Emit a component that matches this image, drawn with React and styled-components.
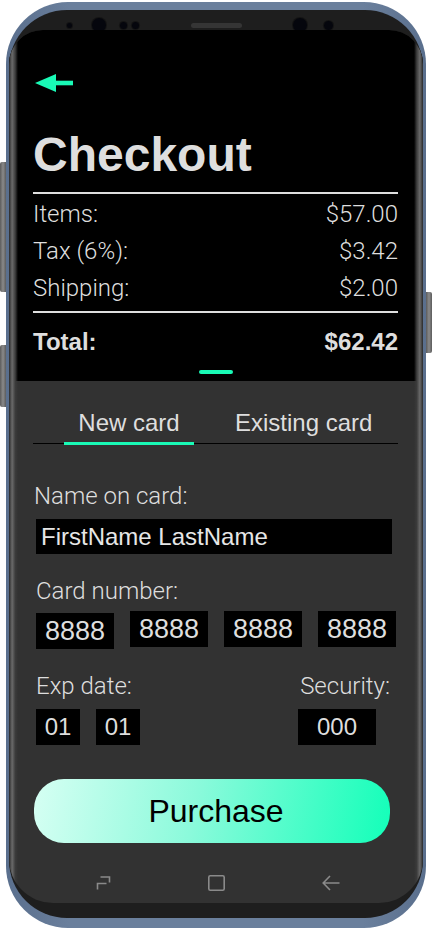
import React from "react"
import styled, { createGlobalStyle } from "styled-components"

const MINT = "#19fab6"
const TEXT = "#dedede"
const SANS = `"Liberation Sans", Arial, sans-serif`
const LIGHT = `Roboto, "Liberation Sans", sans-serif`

const GlobalStyle = createGlobalStyle`
  html, body {
    margin: 0;
    padding: 0;
    background: #ffffff;
  }
  * {
    box-sizing: border-box;
  }
`

const Stage = styled.div`
  padding: 2px 6px;
  width: 432px;
`

const Phone = styled.div`
  position: relative;
  width: 420px;
  height: 926px;
  padding: 8px 3px 10px;
  border-radius: 62px;
  background: linear-gradient(to right, #5a6f8d, #6a7f9c 15%, #6a7f9c 85%, #5a6f8d);
`

const SideButton = styled.div`
  position: absolute;
  top: ${p => p.$top}px;
  height: ${p => p.$height}px;
  width: 6px;
  ${p => (p.$right ? "right: -6px;" : "left: -6px;")}
  border-radius: ${p => (p.$right ? "0 2px 2px 0" : "2px 0 0 2px")};
  background: linear-gradient(to right, #5c5c5c, #8a8a8a, #5c5c5c);
`

const Bezel = styled.div`
  display: flex;
  flex-direction: column;
  height: 100%;
  padding-bottom: 15px;
  border-radius: 58px;
  background: #1e1e1e;
`

const TopBar = styled.div`
  display: flex;
  align-items: center;
  height: 20px;
  padding-top: 10px;
`

const Dot = styled.div`
  flex: none;
  width: ${p => p.$size}px;
  height: ${p => p.$size}px;
  margin-left: ${p => p.$gap}px;
  border-radius: 50%;
  background: #05060d;
  box-shadow: 0 0 0 1px #141414;
`

const Speaker = styled.div`
  flex: none;
  width: 51px;
  height: 5px;
  margin-left: 52.5px;
  border-radius: 3px;
  background: #353535;
`

const Screen = styled.div`
  position: relative;
  flex: 1;
  display: flex;
  flex-direction: column;
  overflow: hidden;
  border-radius: 34px 34px 44px 44px;
  background: #323232;

  &::before,
  &::after {
    content: "";
    position: absolute;
    top: 0;
    bottom: 0;
    width: 9px;
    pointer-events: none;
  }
  &::before {
    left: 0;
    background: linear-gradient(to right, #2a2a2a, #6a6a6a 35%, #3b3b3b 70%, rgba(0, 0, 0, 0));
  }
  &::after {
    right: 0;
    background: linear-gradient(to left, #2a2a2a, #6a6a6a 35%, #3b3b3b 70%, rgba(0, 0, 0, 0));
  }
`

const Header = styled.div`
  display: flex;
  flex-direction: column;
  padding: 44px 25px 7px 24px;
  background: #000000;
  color: ${TEXT};
`

const BackArrow = styled.svg`
  display: block;
  margin-left: 2px;
`

const Title = styled.h1`
  margin: 35px 0 0;
  font-family: ${SANS};
  font-size: 48px;
  font-weight: 700;
  line-height: 56px;
`

const Divider = styled.div`
  height: 2px;
  margin-top: ${p => p.$top}px;
  background: ${TEXT};
`

const SummaryRow = styled.div`
  display: flex;
  justify-content: space-between;
  margin-top: ${p => p.$top || 0}px;
  font-family: ${p => (p.$bold ? SANS : LIGHT)};
  font-size: 24px;
  font-weight: ${p => (p.$bold ? 700 : 300)};
  line-height: 37px;
`

const Handle = styled.div`
  width: 34px;
  height: 4px;
  margin: 10px auto 0;
  border-radius: 2px;
  background: ${MINT};
`

const Panel = styled.div`
  display: flex;
  flex-direction: column;
  flex: 1;
  padding: 27px 25px 0 24px;
  color: ${TEXT};
`

const TabBar = styled.div`
  display: flex;
  align-items: flex-start;
  gap: 41px;
  padding-left: 31px;
  border-bottom: 1px solid #000000;
`

const Tab = styled.div`
  flex: none;
  width: ${p => p.$w}px;
  padding-bottom: 4px;
  font-family: ${SANS};
  font-size: 24px;
  line-height: 30px;
  text-align: center;
  white-space: nowrap;
  ${p => (p.$active ? `border-bottom: 3px solid ${MINT}; margin-bottom: -2px;` : "")}
`

const Label = styled.div`
  margin-top: ${p => p.$top || 0}px;
  margin-left: ${p => p.$left || 0}px;
  align-self: ${p => (p.$end ? "flex-end" : "flex-start")};
  font-family: ${LIGHT};
  font-size: 24px;
  font-weight: 300;
  line-height: 30px;
  white-space: nowrap;
`

const NameField = styled.div`
  width: 356px;
  height: 35px;
  margin: 8px 0 0 3px;
  padding-left: 5px;
  background: #000000;
  color: #e6e6e6;
  font-family: ${SANS};
  font-size: 24px;
  line-height: 35px;
`

const BoxRow = styled.div`
  display: flex;
  align-items: flex-start;
  gap: ${p => p.$gap}px;
  margin: ${p => p.$top}px 0 0 ${p => p.$left ?? 3}px;
`

const Box = styled.div`
  width: ${p => p.$w}px;
  height: 36px;
  margin-top: ${p => p.$shift || 0}px;
  background: #000000;
  color: #dedede;
  font-family: ${SANS};
  font-size: ${p => p.$size || 24}px;
  line-height: 36px;
  text-align: center;
`

const ExpRow = styled.div`
  display: flex;
  justify-content: space-between;
  margin-top: 22px;
`

const FieldGroup = styled.div`
  display: flex;
  flex-direction: column;
  align-items: flex-start;
  width: ${p => (p.$w ? `${p.$w}px` : "auto")};
  margin-right: ${p => p.$right || 0}px;
`

const PurchaseButton = styled.button`
  width: 356px;
  height: 64px;
  margin: 34px 0 0 1px;
  padding: 0 0 0 8px;
  border: none;
  border-radius: 30px;
  background: linear-gradient(100deg, #d6fff3 0%, #8bfadb 45%, #13ffb9 100%);
  color: #000000;
  font-family: ${SANS};
  font-size: 32px;
  line-height: 64px;
  cursor: pointer;
`

const NavBar = styled.div`
  display: flex;
  align-items: center;
  justify-content: space-between;
  height: 40px;
  margin-top: auto;
  padding: 0 83px 0 87px;
`

const NavIcon = styled.svg`
  display: block;
  fill: none;
  stroke: #8a8a8a;
  stroke-width: 1.6;
`

const App = () => {
  const summary = [
    { label: "Items:", value: "$57.00" },
    { label: "Tax (6%):", value: "$3.42" },
    { label: "Shipping:", value: "$2.00" },
  ]

  return (
    <Stage>
      <GlobalStyle />
      <Phone>
        <SideButton $top={160} $height={130} />
        <SideButton $top={343} $height={62} />
        <SideButton $right $top={290} $height={61} />
        <Bezel>
          <TopBar>
            <Dot $size={5} $gap={57.5} />
            <Dot $size={14} $gap={20.5} />
            <Dot $size={7} $gap={13.5} />
            <Dot $size={7} $gap={5} />
            <Speaker />
            <Dot $size={14} $gap={51} />
            <Dot $size={9} $gap={16.5} />
          </TopBar>
          <Screen>
            <Header>
              <BackArrow width="38" height="18" viewBox="0 0 38 18">
                <polygon points="0,9 21,0 21,18" fill={MINT} />
                <rect x="20" y="6.7" width="18" height="4.6" fill={MINT} />
              </BackArrow>
              <Title>Checkout</Title>
              <Divider $top={9} />
              {summary.map((row, i) => (
                <SummaryRow key={row.label} $top={i === 0 ? 2 : 0}>
                  <span>{row.label}</span>
                  <span>{row.value}</span>
                </SummaryRow>
              ))}
              <Divider $top={4} />
              <SummaryRow $bold $top={10}>
                <span>Total:</span>
                <span>$62.42</span>
              </SummaryRow>
              <Handle />
            </Header>

            <Panel>
              <TabBar>
                <Tab $active $w={130}>New card</Tab>
                <Tab $w={136}>Existing card</Tab>
              </TabBar>

              <Label $top={37} $left={1}>Name on card:</Label>
              <NameField>FirstName LastName</NameField>

              <Label $top={22} $left={3}>Card number:</Label>
              <BoxRow $top={5} $gap={16}>
                <Box $w={78} $size={27} $shift={2}>8888</Box>
                <Box $w={78} $size={27}>8888</Box>
                <Box $w={78} $size={27}>8888</Box>
                <Box $w={78} $size={27}>8888</Box>
              </BoxRow>

              <ExpRow>
                <FieldGroup>
                  <Label $left={3}>Exp date:</Label>
                  <BoxRow $top={8} $gap={16}>
                    <Box $w={44}>01</Box>
                    <Box $w={44}>01</Box>
                  </BoxRow>
                </FieldGroup>
                <FieldGroup $w={92} $right={8}>
                  <Label $end>Security:</Label>
                  <BoxRow $top={8} $gap={0} $left={0}>
                    <Box $w={78}>000</Box>
                  </BoxRow>
                </FieldGroup>
              </ExpRow>

              <PurchaseButton>Purchase</PurchaseButton>
            </Panel>

            <NavBar>
              <NavIcon width="15" height="16" viewBox="0 0 15 16">
                <path d="M4.5 2 H13.5 V7.5" />
                <path d="M1.5 14.5 V8.5 H10.5" />
              </NavIcon>
              <NavIcon width="17" height="16" viewBox="0 0 17 16">
                <rect x="0.8" y="0.8" width="15.4" height="14.4" rx="1.5" />
              </NavIcon>
              <NavIcon width="18" height="16" viewBox="0 0 18 16">
                <path d="M8 1 L1.2 8 L8 15 M1.2 8 H17.5" />
              </NavIcon>
            </NavBar>
          </Screen>
        </Bezel>
      </Phone>
    </Stage>
  )
}

export default App
